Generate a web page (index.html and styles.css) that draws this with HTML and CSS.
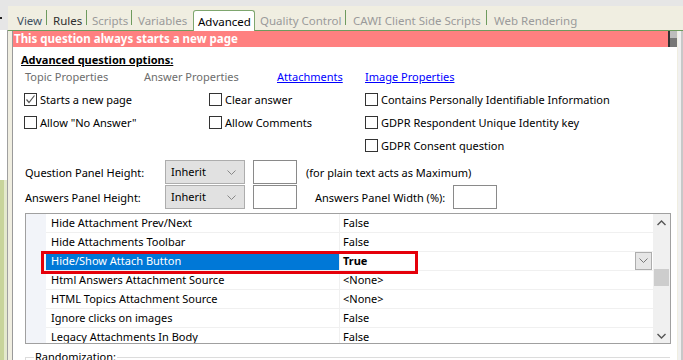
FILE: index.html
```html
<!DOCTYPE html>
<html lang="en">
<head>
    <meta charset="UTF-8">
    <meta name="viewport" content="width=device-width, initial-scale=1.0">
    <title>Question Properties - Advanced</title>
    <link rel="stylesheet" href="styles.css">
</head>
<body>
    <div class="app">
        <div class="side">
            <div class="side-mark"></div>
            <div class="side-list"></div>
            <div class="side-green"></div>
        </div>

        <div class="main">
            <div class="tabs">
                <div class="tab tab-view sep">View</div>
                <div class="tab tab-rules sep">Rules</div>
                <div class="tab tab-scripts sep">Scripts</div>
                <div class="tab tab-variables">Variables</div>
                <div class="tab tab-advanced active">Advanced</div>
                <div class="tab tab-quality sep">Quality Control</div>
                <div class="tab tab-cawi sep">CAWI Client Side Scripts</div>
                <div class="tab tab-web">Web Rendering</div>
            </div>

            <div class="content">
                <div class="page">
                    <div class="banner">
                        <span class="banner-text">This question always starts a new page</span>
                        <span class="banner-corner"></span>
                    </div>

                    <div class="section-title">Advanced question options:</div>

                    <div class="link-row">
                        <span class="link-col c1 muted">Topic Properties</span>
                        <span class="link-col c2 muted">Answer Properties</span>
                        <a class="link-col c3" href="#">Attachments</a>
                        <a class="link-col c4" href="#">Image Properties</a>
                    </div>

                    <div class="check-grid">
                        <label class="check"><span class="box checked"><svg width="11" height="11" viewBox="0 0 11 11"><polyline points="1.5,5.5 4,8.5 9.5,1.5" fill="none" stroke="#555" stroke-width="1.2"/></svg></span>Starts a new page</label>
                        <label class="check"><span class="box"></span>Clear answer</label>
                        <label class="check"><span class="box"></span>Contains Personally Identifiable Information</label>

                        <label class="check"><span class="box"></span>Allow "No Answer"</label>
                        <label class="check"><span class="box"></span>Allow Comments</label>
                        <label class="check"><span class="box"></span>GDPR Respondent Unique Identity key</label>

                        <span></span>
                        <span></span>
                        <label class="check"><span class="box"></span>GDPR Consent question</label>
                    </div>

                    <div class="panel-row first">
                        <span class="panel-label">Question Panel Height:</span>
                        <div class="select">Inherit
                            <svg class="chev" width="9" height="6" viewBox="0 0 9 6"><polyline points="0.5,0.5 4.5,4.5 8.5,0.5" fill="none" stroke="#888" stroke-width="1"/></svg>
                        </div>
                        <div class="num-input"></div>
                        <span class="panel-note">(for plain text acts as Maximum)</span>
                    </div>

                    <div class="panel-row">
                        <span class="panel-label">Answers Panel Height:</span>
                        <div class="select">Inherit
                            <svg class="chev" width="9" height="6" viewBox="0 0 9 6"><polyline points="0.5,0.5 4.5,4.5 8.5,0.5" fill="none" stroke="#888" stroke-width="1"/></svg>
                        </div>
                        <div class="num-input"></div>
                        <span class="panel-width-label">Answers Panel Width (%):</span>
                        <div class="num-input small-gap"></div>
                    </div>

                    <div class="prop-grid">
                        <div class="prop-rows">
                            <div class="prop-row"><span class="margin"></span><span class="name">Hide Attachment Prev/Next</span><span class="value">False</span></div>
                            <div class="prop-row"><span class="margin"></span><span class="name">Hide Attachments Toolbar</span><span class="value">False</span></div>
                            <div class="prop-row selected"><span class="margin"></span><span class="name">Hide/Show Attach Button</span><span class="value">True
                                <span class="drop-btn"><svg width="9" height="6" viewBox="0 0 9 6"><polyline points="0.5,0.5 4.5,4.5 8.5,0.5" fill="none" stroke="#777" stroke-width="1"/></svg></span></span></div>
                            <div class="prop-row"><span class="margin"></span><span class="name">Html Answers Attachment Source</span><span class="value">&lt;None&gt;</span></div>
                            <div class="prop-row"><span class="margin"></span><span class="name">HTML Topics Attachment Source</span><span class="value">&lt;None&gt;</span></div>
                            <div class="prop-row"><span class="margin"></span><span class="name">Ignore clicks on images</span><span class="value">False</span></div>
                            <div class="prop-row"><span class="margin"></span><span class="name">Legacy Attachments In Body</span><span class="value">False</span></div>
                        </div>
                        <div class="grid-scroll">
                            <svg class="arrow" width="9" height="6" viewBox="0 0 9 6"><polyline points="0.5,5 4.5,1 8.5,5" fill="none" stroke="#555" stroke-width="1.4"/></svg>
                            <div class="thumb"></div>
                            <svg class="arrow down" width="9" height="6" viewBox="0 0 9 6"><polyline points="0.5,1 4.5,5 8.5,1" fill="none" stroke="#555" stroke-width="1.4"/></svg>
                        </div>
                        <div class="highlight"></div>
                    </div>

                    <div class="group">
                        <span class="group-title">Randomization:</span>
                    </div>
                </div>
                <div class="vscroll"></div>
            </div>
        </div>
    </div>
</body>
</html>
```

FILE: styles.css
```css
body {
    margin: 0;
    background-color: #e6e6e6;
    font-family: "Noto Sans", "Open Sans", sans-serif;
    font-size: 11px;
    color: #000;
}

.app {
    display: grid;
    grid-template-columns: 8px 1fr;
    width: 683px;
    height: 360px;
    overflow: hidden;
}

/* left docked panel (mostly hidden) */
.side {
    display: flex;
    flex-direction: column;
    padding-top: 17px;
}

.side-mark {
    width: 2px;
    height: 2px;
    background-color: #222;
    margin-bottom: 11px;
}

.side-list {
    height: 150px;
    background-color: #fff;
    border-right: 1px solid #a0a0a0;
}

.side-green {
    flex: 1;
    background: linear-gradient(to right, #c8d49a 0, #c8d49a 4px, #e4e9cc 4px);
    border-right: 1px solid #a0a0a0;
}

.main {
    display: flex;
    flex-direction: column;
    padding-top: 6px;
}

/* tab strip */
.tabs {
    height: 24px;
    display: flex;
    align-items: flex-end;
    background-color: #f0eee1;
    border-bottom: 1px solid #6e9b5e;
    padding-left: 5px;
    font-size: 11.5px;
}

.tab {
    position: relative;
    height: 20px;
    line-height: 22px;
    color: #9a9a9a;
    white-space: nowrap;
    box-sizing: border-box;
}

.tab.sep::after {
    content: "";
    position: absolute;
    right: 0;
    top: 0;
    width: 1px;
    height: 15px;
    background-color: #6e9b5e;
}

.tab-view { width: 34px; padding-left: 4px; color: #3e5163; }
.tab-rules { width: 40px; padding-left: 6px; color: #2f2f2f; }
.tab-scripts { width: 45px; padding-left: 5px; }
.tab-variables { width: 61px; padding-left: 6px; }
.tab-quality { width: 91px; padding-left: 5px; }
.tab-cawi { width: 141px; padding-left: 7px; }
.tab-web { padding-left: 7px; }

.tab.active {
    width: 62px;
    height: 21px;
    margin-bottom: -1px;
    padding-left: 4px;
    background-color: #fff;
    color: #000;
    border: 1px solid #7ea66e;
    border-bottom: none;
    border-radius: 3px 3px 0 0;
    line-height: 22px;
}

.content {
    flex: 1;
    display: flex;
    background-color: #f0eee1;
    padding-left: 4px;
}

.page {
    width: 664px;
    background-color: #fff;
    border-left: 1px solid #9a9a9a;
    overflow: hidden;
}

.vscroll {
    width: 6px;
    margin-left: 1px;
    background: linear-gradient(to right, #f0f0f0 0, #f0f0f0 3px, #c8c8c8 3px);
}

/* red notice */
.banner {
    height: 16px;
    display: flex;
}

.banner-text {
    flex: 1;
    background-color: #ff8080;
    color: #fff;
    font-weight: bold;
    font-size: 11.5px;
    line-height: 16px;
    padding-left: 1px;
}

.banner-corner {
    width: 7px;
    border-left: 2px solid #333;
    background: linear-gradient(#bdbdbd 0, #bdbdbd 7px, #777 7px);
}

.section-title {
    margin-left: 8px;
    padding-top: 5px;
    line-height: 16px;
    font-weight: bold;
    text-decoration: underline;
}

.link-row {
    display: flex;
    height: 18px;
    line-height: 18px;
    padding-left: 12px;
}

.link-col { white-space: nowrap; }
.c1 { width: 119px; }
.c2 { width: 133px; }
.c3 { width: 88px; }

.muted { color: #6d6d6d; }

a {
    color: #0000ff;
    text-decoration: underline;
}

.check-grid {
    display: grid;
    grid-template-columns: 185px 156px 1fr;
    grid-auto-rows: 23px;
    padding-left: 11px;
    margin-top: 2px;
}

.check {
    display: flex;
    align-items: center;
    gap: 3px;
    white-space: nowrap;
}

.box {
    width: 11px;
    height: 11px;
    border: 1px solid #333;
    background-color: #fff;
    display: flex;
    align-items: center;
    justify-content: center;
}

.panel-row {
    display: flex;
    align-items: center;
    height: 24px;
    padding-left: 12px;
    margin-top: 1px;
}

.panel-row.first {
    margin-top: 3px;
}

.panel-label {
    width: 140px;
}

.select {
    position: relative;
    width: 73px;
    height: 22px;
    line-height: 22px;
    padding-left: 5px;
    background-color: #e1e1e1;
    border: 1px solid #adadad;
}

.chev {
    position: absolute;
    right: 8px;
    top: 9px;
}

.num-input {
    width: 42px;
    height: 22px;
    margin-left: 8px;
    border: 1px solid #8a8a8a;
    background-color: #fff;
}

.panel-note {
    margin-left: 9px;
}

.panel-width-label {
    margin-left: 18px;
    width: 130px;
    white-space: nowrap;
}

.num-input.small-gap {
    margin-left: 8px;
}

/* property grid */
.prop-grid {
    position: relative;
    display: flex;
    margin: 4px 0 0 12px;
    width: 644px;
    height: 129px;
    border: 1px solid #a0a0a0;
}

.prop-rows {
    flex: 1;
    overflow: hidden;
}

.prop-row {
    display: flex;
    height: 19px;
    line-height: 18px;
}

.margin {
    width: 20px;
    background-color: #f2f4f9;
}

.name,
.value {
    border-bottom: 1px solid #f0f0f0;
    white-space: nowrap;
}

.name {
    width: 288px;
    padding-left: 5px;
    border-right: 1px solid #f0f0f0;
}

.value {
    position: relative;
    flex: 1;
    padding-left: 3px;
}

.prop-row.selected .name {
    background-color: #0078d7;
    color: #fff;
}

.prop-row.selected .value {
    font-weight: bold;
}

.drop-btn {
    position: absolute;
    right: 1px;
    top: 0;
    width: 15px;
    height: 16px;
    background-color: #e6e6e6;
    border: 1px solid #adadad;
    display: flex;
    align-items: center;
    justify-content: center;
}

.grid-scroll {
    width: 17px;
    background-color: #f0f0f0;
    display: flex;
    flex-direction: column;
    align-items: center;
}

.arrow {
    margin-top: 6px;
}

.thumb {
    width: 15px;
    height: 17px;
    margin-top: 43px;
    background-color: #cdcdcd;
}

.arrow.down {
    margin-top: auto;
    margin-bottom: 4px;
}

/* annotation box drawn over the grid */
.highlight {
    position: absolute;
    left: 15px;
    top: 37px;
    width: 371px;
    height: 17px;
    border: 3px solid #e5000a;
}

.group {
    margin: 13px 0 0 12px;
    width: 644px;
    height: 20px;
    border-top: 1px solid #dcdcdc;
    border-left: 1px solid #dcdcdc;
}

.group-title {
    position: relative;
    top: -9px;
    left: 8px;
    padding: 0 1px;
    background-color: #fff;
}
```
